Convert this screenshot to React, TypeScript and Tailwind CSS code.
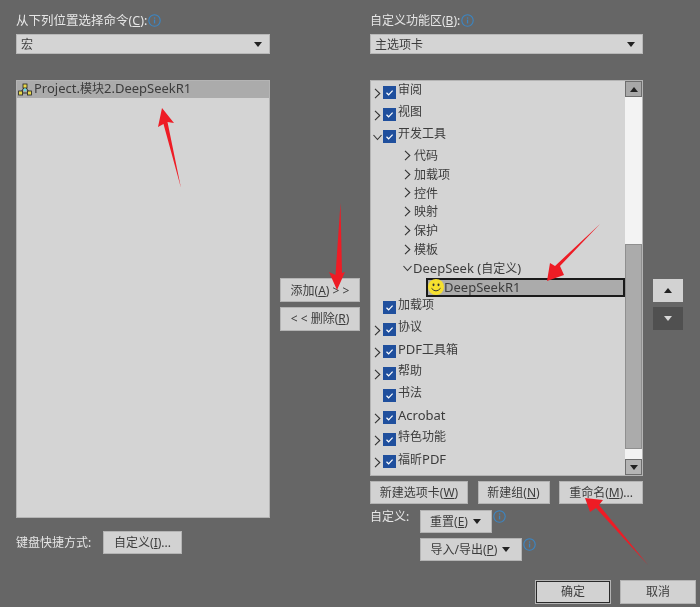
import React from 'react';

const FONT = "font-['Noto_Sans','Noto_Sans_CJK_SC',sans-serif]";

// latin runs sit a point larger than the CJK ones in the reference
function Mixed({ text }: { text: string }) {
  const parts = text.match(/[\x00-\x7f]+|[^\x00-\x7f]+/g) ?? [];
  return (
    <>
      {parts.map((part, i) =>
        /^[\x00-\x7f]/.test(part) ? (
          <span key={i} className="text-[13px]">{part}</span>
        ) : (
          <span key={i}>{part}</span>
        )
      )}
    </>
  );
}

function InfoIcon({ className = '' }: { className?: string }) {
  return (
    <svg viewBox="0 0 13 13" className={`w-[13px] h-[13px] shrink-0 ${className}`}>
      <circle cx="6.5" cy="6.5" r="5.7" fill="none" stroke="#3b86c4" strokeWidth="1.1" />
      <rect x="5.9" y="5.6" width="1.3" height="3.8" fill="#3b86c4" />
      <rect x="5.9" y="3.4" width="1.3" height="1.3" fill="#3b86c4" />
    </svg>
  );
}

function Caret({ up, color = '#222222', className = '' }: { up?: boolean; color?: string; className?: string }) {
  return (
    <svg viewBox="0 0 8 5" className={`w-[8px] h-[5px] shrink-0 ${className}`}>
      <path d={up ? 'M0 5 L4 0 L8 5 Z' : 'M0 0 L8 0 L4 5 Z'} fill={color} />
    </svg>
  );
}

function Chevron({ open, className = '' }: { open?: boolean; className?: string }) {
  return (
    <svg viewBox="0 0 9 11" className={`w-[9px] h-[11px] shrink-0 ${className}`}>
      <path
        d={open ? 'M0.5 3 L4.5 7.5 L8.5 3' : 'M2 0.8 L6.8 5.5 L2 10.2'}
        fill="none"
        stroke="#333333"
        strokeWidth="1.1"
      />
    </svg>
  );
}

function Check() {
  return (
    <span className="w-[13px] h-[13px] shrink-0 bg-[#1f4f9d] flex items-center justify-center">
      <svg viewBox="0 0 13 13" className="w-[13px] h-[13px]">
        <path d="M3.5 6.8 L5.6 8.8 L9.6 4.6" fill="none" stroke="#ffffff" strokeWidth="1.2" />
      </svg>
    </span>
  );
}

function MacroIcon() {
  return (
    <svg viewBox="0 0 14 13" className="w-[14px] h-[13px] shrink-0">
      <path d="M7 3 L2.5 10 M7 3 L11.5 10 M2.5 10 L11.5 10" stroke="#333333" strokeWidth="1" fill="none" />
      <rect x="5" y="1" width="4" height="4" fill="#e8d84a" stroke="#222222" strokeWidth="0.8" />
      <rect x="0.6" y="8" width="4" height="4" fill="#e8d84a" stroke="#222222" strokeWidth="0.8" />
      <rect x="9.4" y="8" width="4" height="4" fill="#e8d84a" stroke="#222222" strokeWidth="0.8" />
      <circle cx="7" cy="6.8" r="1.4" fill="#5fe0e6" />
    </svg>
  );
}

function Smiley() {
  return (
    <svg viewBox="0 0 16 16" className="w-[16px] h-[16px] shrink-0">
      <circle cx="8" cy="8" r="8" fill="#f6e02e" />
      <ellipse cx="5.5" cy="5.8" rx="1" ry="1.4" fill="#333333" />
      <ellipse cx="10.5" cy="5.8" rx="1" ry="1.4" fill="#333333" />
      <path d="M3.5 9.3 Q8 14.5 12.5 9.3" fill="none" stroke="#333333" strokeWidth="1" />
    </svg>
  );
}

function Btn({ className = '', children }: { className?: string; children: React.ReactNode }) {
  return (
    <div className={`h-[23px] flex items-center justify-center bg-[#d2d2d2] border border-[#b4b4b4] text-[12px] text-[#3c3c3c] whitespace-nowrap ${className}`}>
      {children}
    </div>
  );
}

function Select({ value }: { value: string }) {
  return (
    <div className="h-[20px] flex items-center justify-between bg-[#d4d4d4] border border-[#b8b8b8] pl-[4px] pr-[7px]">
      <span className="mt-[1px]">{value}</span>
      <Caret className="mt-[1px]" />
    </div>
  );
}

const topBefore = [
  { label: '审阅', chevron: true },
  { label: '视图', chevron: true },
  { label: '开发工具', open: true },
];
const children = ['代码', '加载项', '控件', '映射', '保护', '模板'];
const topAfter = [
  { label: '加载项' },
  { label: '协议', chevron: true },
  { label: 'PDF工具箱', chevron: true },
  { label: '帮助', chevron: true },
  { label: '书法' },
  { label: 'Acrobat', chevron: true },
  { label: '特色功能', chevron: true },
  { label: '福昕PDF', chevron: true },
];

function TopRow({ label, chevron, open }: { label: string; chevron?: boolean; open?: boolean }) {
  return (
    <div className="h-[22px] flex items-center">
      <span className="w-[12px] flex justify-center">
        {(chevron || open) && <Chevron open={open} className="mt-[2px]" />}
      </span>
      <Check />
      <span className="ml-[2px] mb-[5px] leading-none">
        <Mixed text={label} />
      </span>
    </div>
  );
}

function ChildRow({ label }: { label: string }) {
  return (
    <div className="h-[18.8px] flex items-center pl-[32px]">
      <Chevron />
      <span className="ml-[2px] mt-[1px]">{label}</span>
    </div>
  );
}

function Scrollbar() {
  return (
    <div className="w-[17px] shrink-0 bg-[#f3f3f3] flex flex-col">
      <div className="h-[16px] bg-[#a8a8a8] border border-[#6e6e6e] flex items-center justify-center">
        <Caret up />
      </div>
      <div className="h-[147px]" />
      <div className="h-[205px] bg-[#ababab] border border-[#8f8f8f]" />
      <div className="flex-1" />
      <div className="h-[16px] bg-[#b4b4b4] border border-[#6e6e6e] flex items-center justify-center">
        <Caret />
      </div>
    </div>
  );
}

function Arrows() {
  return (
    <svg className="absolute inset-0 pointer-events-none" width="700" height="607" viewBox="0 0 700 607">
      <g fill="#ee1c25">
        <path d="M162 108 L174 123 L167.500 122 L181 188 L163.500 124 L158 127 Z" />
        <path d="M340.500 203 L342 273 L345 272 L337 290 L329 272 L335.500 275 Z" />
        <path d="M600 224 L560 266 L564 275 L547 281 L550 263 L555 266 Z" />
        <path d="M648 565 L596 508 L590 512 L585 498 L603 500 L599 505 Z" />
      </g>
    </svg>
  );
}

export default function App() {
  return (
    <div className={`relative w-[700px] h-[607px] overflow-hidden bg-[#666666] text-[12px] leading-[18px] text-[#3c3c3c] ${FONT} blur-[0.5px]`}>
      <div className="flex h-[561px]">
        <div className="ml-[16px] w-[254px] flex flex-col">
          <div className="h-[34px] flex items-end pb-[4px] text-[12.5px] text-[#e6e6e6]">
            <span>从下列位置选择命令(<u>C</u>):</span>
            <InfoIcon className="ml-[1px] mb-[3px]" />
          </div>
          <Select value="宏" />
          <div className="mt-[26px] h-[438px] bg-[#d4d4d4] border border-[#b4b4b4]">
            <div className="h-[17px] bg-[#ababab] flex items-center pl-[1px]">
              <MacroIcon />
              <span className="ml-[2px] mb-[2px]">
                <Mixed text="Project.模块2.DeepSeekR1" />
              </span>
            </div>
          </div>
          <div className="mt-[13px] flex items-center">
            <span className="w-[87px] text-[#e6e6e6]">键盘快捷方式:</span>
            <Btn className="w-[79px]">
              <span className="mt-[1px]">自定义(<u>I</u>)...</span>
            </Btn>
          </div>
        </div>

        <div className="ml-[10px] w-[80px] pt-[278px] flex flex-col gap-[5px]">
          <Btn className="h-[24px] text-[12.5px]">
            <span className="mt-[1px]">添加(<u>A</u>) &gt; &gt;</span>
          </Btn>
          <Btn className="h-[24px] text-[12.5px]">
            <span>&lt; &lt; 删除(<u>R</u>)</span>
          </Btn>
        </div>

        <div className="ml-[10px] w-[273px] flex flex-col">
          <div className="h-[34px] flex items-end pb-[4px] text-[#e6e6e6]">
            <span>自定义功能区(<u>B</u>):</span>
            <InfoIcon className="ml-[1px] mb-[3px]" />
          </div>
          <Select value="主选项卡" />
          <div className="mt-[26px] h-[396px] flex bg-[#d4d4d4] border border-[#b4b4b4]">
            <div className="flex-1 min-w-0">
              {topBefore.map(row => (
                <TopRow key={row.label} {...row} />
              ))}
              <div className="-mt-[1px]">
                {children.map(label => (
                  <ChildRow key={label} label={label} />
                ))}
                <div className="h-[18.8px] flex items-center pl-[32px]">
                  <Chevron open />
                  <span className="ml-[1px]">
                    <Mixed text="DeepSeek (自定义)" />
                  </span>
                </div>
              </div>
              <div className="h-[19px] ml-[55px] flex items-center bg-[#ababab] border-2 border-[#1a1a1a]">
                <Smiley />
                <span>
                  <Mixed text="DeepSeekR1" />
                </span>
              </div>
              {topAfter.map(row => (
                <TopRow key={row.label} {...row} />
              ))}
            </div>
            <Scrollbar />
          </div>
          <div className="mt-[5px] flex justify-between">
            <Btn className="w-[98px]">
              <span>新建选项卡(<u>W</u>)</span>
            </Btn>
            <Btn className="w-[72px]">
              <span>新建组(<u>N</u>)</span>
            </Btn>
            <Btn className="w-[84px]">
              <span>重命名(<u>M</u>)...</span>
            </Btn>
          </div>
          <div className="mt-[6px] flex">
            <span className="w-[50px] text-[#e6e6e6] leading-[14px]">自定义:</span>
            <div className="flex flex-col gap-[5px]">
              <div className="flex items-start">
                <Btn className="w-[72px] gap-[5px] pr-[1px]">
                  <span>重置(<u>E</u>)</span>
                  <Caret />
                </Btn>
                <InfoIcon className="ml-[1px]" />
              </div>
              <div className="flex items-start">
                <Btn className="w-[102px] gap-[5px] pr-[1px]">
                  <span>导入/导出(<u>P</u>)</span>
                  <Caret />
                </Btn>
                <InfoIcon className="ml-[1px]" />
              </div>
            </div>
          </div>
        </div>

        <div className="ml-[10px] w-[30px] pt-[279px] flex flex-col gap-[5px]">
          <div className="h-[23px] bg-[#d2d2d2] flex items-center justify-center">
            <Caret up />
          </div>
          <div className="h-[23px] bg-[#505050] flex items-center justify-center">
            <Caret color="#d8d8d8" />
          </div>
        </div>
      </div>

      <div className="mt-[19px] pr-[4px] flex justify-end gap-[9px]">
        <Btn className="w-[76px] h-[24px] outline outline-1 -outline-offset-2 outline-[#2a2a2a]">确定</Btn>
        <Btn className="w-[76px] h-[24px]">取消</Btn>
      </div>

      <Arrows />
    </div>
  );
}
